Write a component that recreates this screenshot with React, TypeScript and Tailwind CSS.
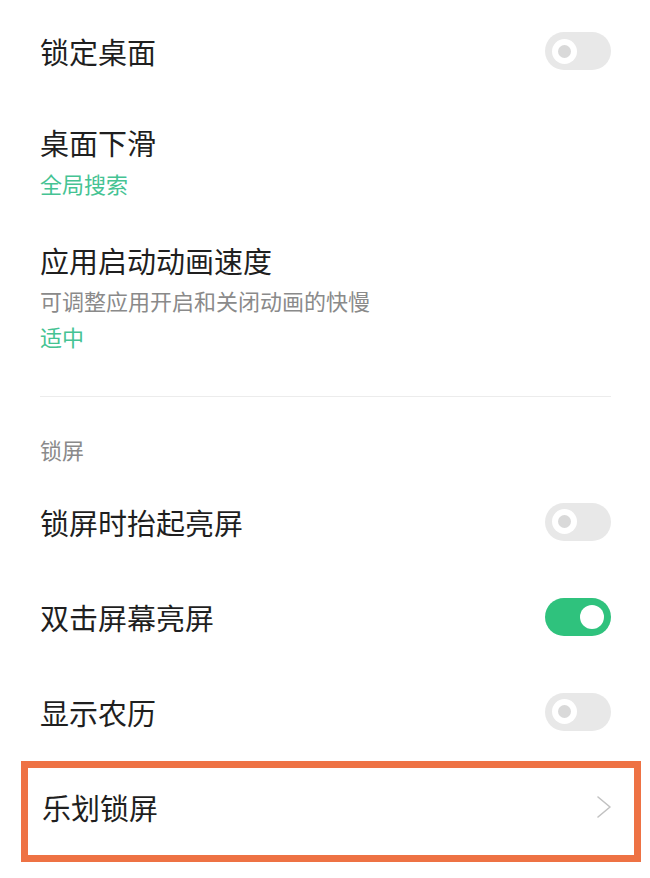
import clsx from 'clsx';

const FONT = "font-['Noto_Sans_CJK_SC','Noto_Sans',sans-serif]";

function Toggle({ on = false }: { on?: boolean }) {
  return (
    <span
      className={clsx(
        'flex h-[38px] w-[66px] shrink-0 items-center rounded-full px-[7px]',
        on ? 'justify-end bg-[#2fc27d]' : 'justify-start bg-[#e8e8e8]',
      )}
    >
      {on ? (
        <span className="size-[24px] rounded-full bg-white" />
      ) : (
        <span className="flex size-[25px] items-center justify-center rounded-full bg-white">
          <span className="size-[13px] rounded-full bg-[#d9d9d9]" />
        </span>
      )}
    </span>
  );
}

function ToggleRow({ label, on }: { label: string; on?: boolean }) {
  return (
    <div className="flex h-[95px] items-center justify-between">
      <span className="text-[29px] leading-[40px] text-[#1f1f1f]">{label}</span>
      <Toggle on={on} />
    </div>
  );
}

export default function App() {
  return (
    <div className={clsx('min-h-[878px] w-[650px] overflow-hidden bg-white', FONT)}>
      <div className="pl-[40px] pr-[39px]">
        <div className="flex h-[102px] items-center justify-between">
          <span className="text-[29px] leading-[40px] text-[#1f1f1f]">锁定桌面</span>
          <Toggle />
        </div>

        <div className="flex flex-col gap-[6px] pt-[20px]">
          <span className="text-[29px] leading-[40px] text-[#1f1f1f]">桌面下滑</span>
          <span className="text-[22px] leading-[30px] text-[#45c393]">全局搜索</span>
        </div>

        <div className="flex flex-col gap-[6px] pt-[42px]">
          <span className="mb-[-1px] text-[29px] leading-[40px] text-[#1f1f1f]">
            应用启动动画速度
          </span>
          <span className="text-[22px] leading-[30px] text-[#8a8a8a]">
            可调整应用开启和关闭动画的快慢
          </span>
          <span className="text-[22px] leading-[30px] text-[#45c393]">适中</span>
        </div>

        <div className="mt-[45px] h-px bg-[#ececec]" />

        <div className="mt-[37px] text-[22px] leading-[30px] text-[#8a8a8a]">锁屏</div>

        <div className="mt-[10px]">
          <ToggleRow label="锁屏时抬起亮屏" />
          <ToggleRow label="双击屏幕亮屏" on />
          <ToggleRow label="显示农历" />
        </div>
      </div>

      <div className="ml-[21px] mt-[2px] flex h-[101px] w-[620px] items-center justify-between border-[7px] border-[#ee7244] pb-[9px] pl-[14px] pr-[22px]">
        <span className="text-[29px] leading-[40px] text-[#1f1f1f]">乐划锁屏</span>
        <svg width="16" height="24" viewBox="0 0 16 24" fill="none">
          <polyline
            points="2,2 14,12 2,22"
            stroke="#c2c2c2"
            strokeWidth="1.6"
            strokeLinecap="round"
            strokeLinejoin="round"
          />
        </svg>
      </div>
    </div>
  );
}
